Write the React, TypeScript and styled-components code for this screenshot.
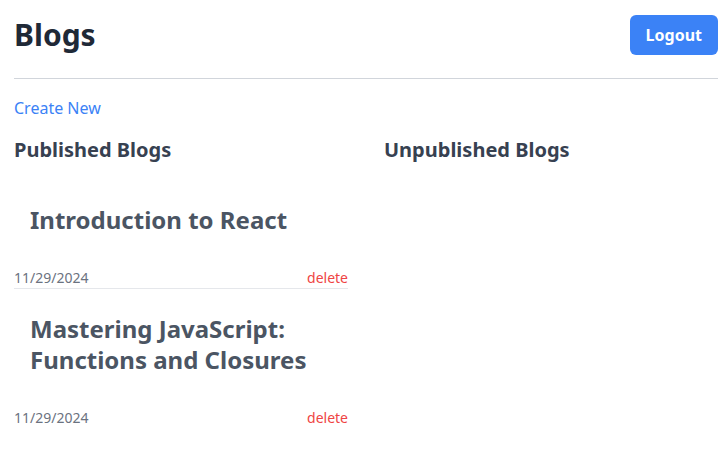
import React from 'react';
import styled, { createGlobalStyle } from 'styled-components';

const GlobalStyle = createGlobalStyle`
  * { box-sizing: border-box; }
  body {
    margin: 0;
    background: #ffffff;
    font-family: "Noto Sans", "Open Sans", sans-serif;
  }
`;

const Page = styled.div`
  padding: 15px 10px 0 14px;
`;

const Header = styled.header`
  display: flex;
  align-items: center;
  justify-content: space-between;
  padding-bottom: 23px;
  border-bottom: 1px solid #d1d5db;
`;

const Title = styled.h1`
  margin: 0;
  font-size: 30px;
  line-height: 36px;
  font-weight: 700;
  color: #1f2937;
`;

const Button = styled.button`
  height: 40px;
  padding: 0 16px;
  border: none;
  border-radius: 6px;
  background: #3b82f6;
  color: #ffffff;
  font-family: inherit;
  font-size: 16px;
  font-weight: 700;
  cursor: pointer;
`;

const CreateLink = styled.a`
  display: inline-block;
  margin-top: 17px;
  font-size: 16px;
  line-height: 24px;
  color: #3b82f6;
  text-decoration: none;
`;

const Columns = styled.div`
  display: grid;
  grid-template-columns: 1fr 1fr;
  gap: 36px;
  margin-top: 16px;
`;

const SectionTitle = styled.h2`
  margin: 0 0 16px;
  font-size: 20px;
  line-height: 28px;
  font-weight: 700;
  color: #374151;
`;

const Card = styled.article<{ $last?: boolean }>`
  border-bottom: 1px solid ${p => (p.$last ? 'transparent' : '#e5e7eb')};
`;

const CardBody = styled.div`
  padding: 24px 16px 16px;
`;

const CardTitle = styled.h3`
  margin: 0;
  font-size: 24px;
  line-height: 31px;
  font-weight: 700;
  color: #4b5563;
`;

const CardFooter = styled.div`
  display: flex;
  justify-content: space-between;
  align-items: center;
  padding-top: 17px;
  font-size: 14px;
  line-height: 20px;
`;

const DateText = styled.span`
  color: #6b7280;
`;

const DeleteLink = styled.span`
  color: #ef4444;
  cursor: pointer;
`;

const blogs = [
  { id: 1, title: 'Introduction to React', date: '11/29/2024' },
  { id: 2, title: 'Mastering JavaScript: Functions and Closures', date: '11/29/2024' },
];

export default function App() {
  return (
    <>
      <GlobalStyle />
      <Page>
        <Header>
          <Title>Blogs</Title>
          <Button>Logout</Button>
        </Header>
        <CreateLink href="#">Create New</CreateLink>
        <Columns>
          <div>
            <SectionTitle>Published Blogs</SectionTitle>
            {blogs.map((b, i) => (
              <Card key={b.id} $last={i === blogs.length - 1}>
                <CardBody>
                  <CardTitle>{b.title}</CardTitle>
                </CardBody>
                <CardFooter>
                  <DateText>{b.date}</DateText>
                  <DeleteLink>delete</DeleteLink>
                </CardFooter>
              </Card>
            ))}
          </div>
          <div>
            <SectionTitle>Unpublished Blogs</SectionTitle>
          </div>
        </Columns>
      </Page>
    </>
  );
}
